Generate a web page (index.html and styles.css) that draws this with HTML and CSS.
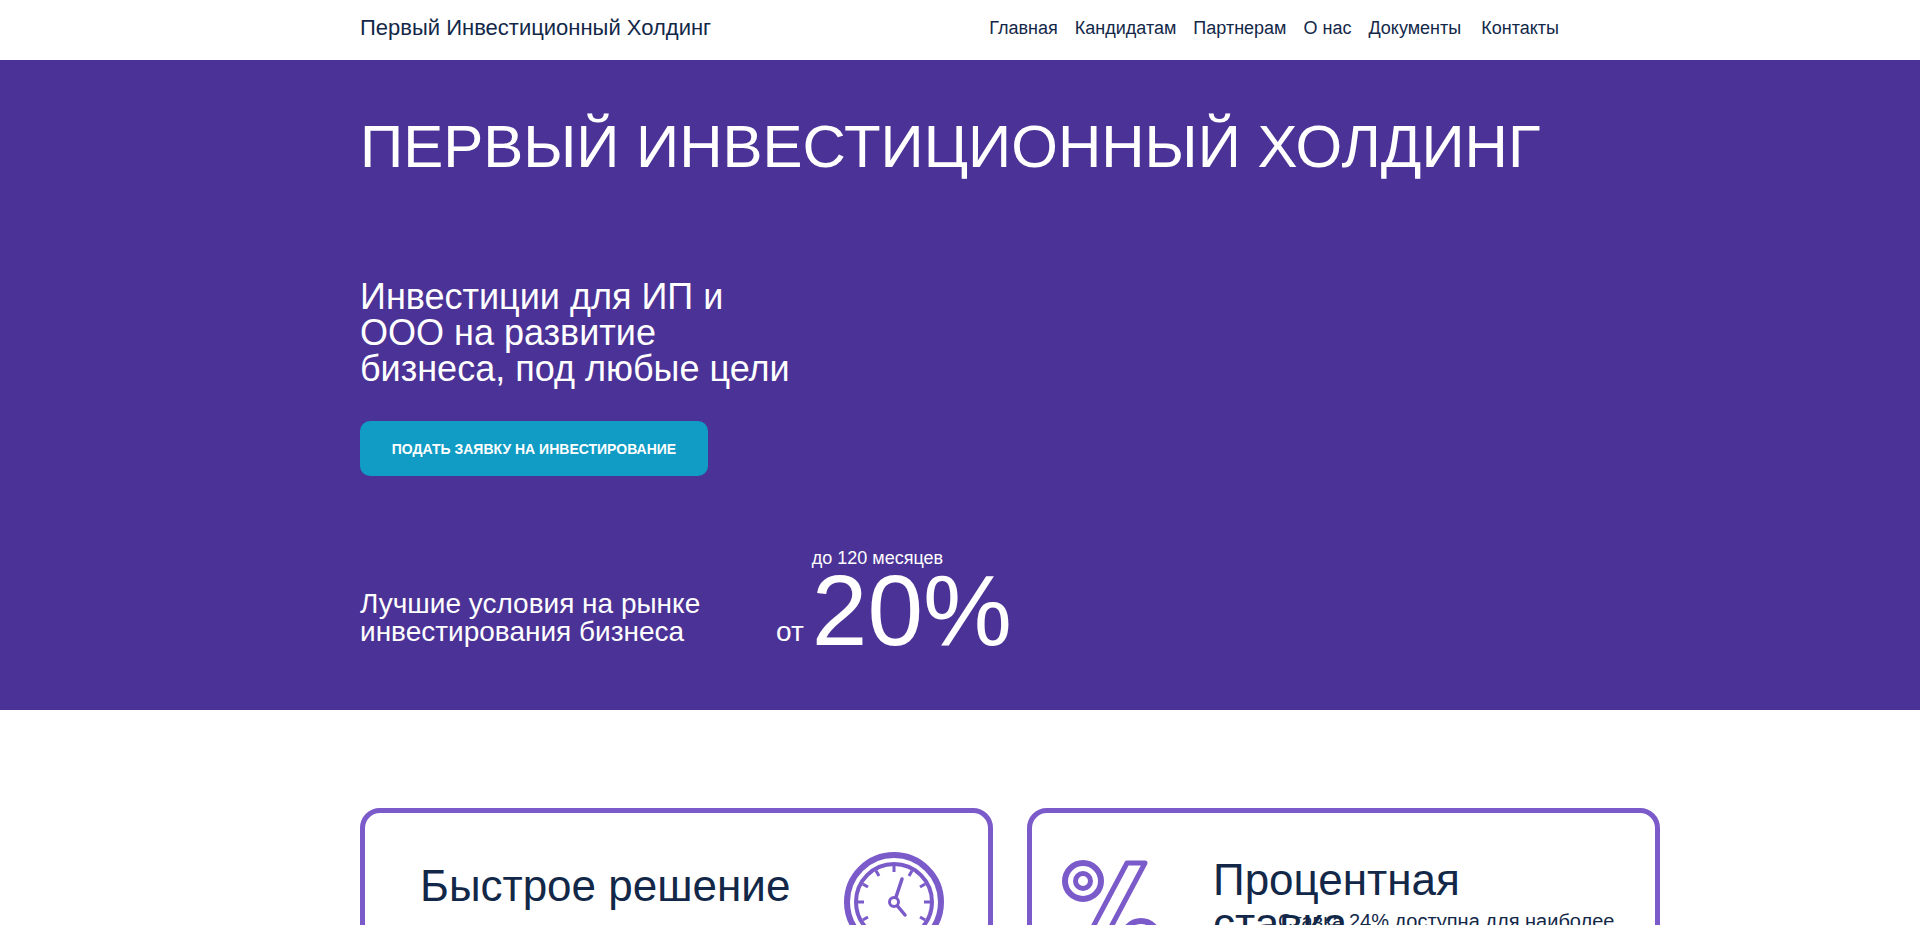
FILE: index.html
```html
<!DOCTYPE html>
<html>
    <head>
        <title>Первый Инвестиционный Холдинг</title>
        <meta charset="utf-8">
        <link rel="stylesheet" href="styles.css">
    </head>
    <body>
        <header class="top-bar">
            <div class="container top-bar-inner">
                <a class="logo" href="#">Первый Инвестиционный Холдинг</a>
                <nav class="menu">
                    <a href="#">Главная</a>
                    <a href="#">Кандидатам</a>
                    <a href="#">Партнерам</a>
                    <a href="#">О нас</a>
                    <a href="#">Документы</a>
                    <a class="menu-last" href="#">Контакты</a>
                </nav>
            </div>
        </header>

        <section class="hero">
            <div class="container">
                <h1>ПЕРВЫЙ ИНВЕСТИЦИОННЫЙ ХОЛДИНГ</h1>
                <h2>Инвестиции для ИП и ООО на развитие бизнеса, под любые цели</h2>
                <a class="apply-btn" href="#">Подать заявку на инвестирование</a>
                <div class="offer">
                    <p class="offer-text">Лучшие условия на рынке инвестирования бизнеса</p>
                    <span class="offer-from">от</span>
                    <div class="offer-rate">
                        <span class="offer-term">до 120 месяцев</span>
                        <span class="offer-value">20%</span>
                    </div>
                </div>
            </div>
        </section>

        <section class="cards">
            <div class="card card-speed">
                <h3>Быстрое решение</h3>
                <svg class="card-icon" viewBox="0 0 100 100" fill="none" stroke="#7b5ac9">
                    <circle cx="50" cy="50" r="47" stroke-width="6"/>
                    <circle cx="50" cy="50" r="38" stroke-width="4"/>
                    <path stroke-width="3" d="M50 14v6M50 80v6M14 50h6M80 50h6M32 18.8l3 5.2M68 18.8l-3 5.2M18.8 32l5.2 3M81.2 32l-5.2 3M18.8 68l5.2-3M81.2 68l-5.2-3M32 81.2l3-5.2M68 81.2l-3-5.2"/>
                    <circle cx="50" cy="50" r="4.5" stroke-width="3"/>
                    <path d="M52 45l6-18M53.5 54l7.5 9" stroke-width="3.5" stroke-linecap="round"/>
                </svg>
            </div>
            <div class="card card-rate">
                <svg class="card-icon" viewBox="0 0 100 100" fill="none" stroke="#7b5ac9" stroke-width="6">
                    <circle cx="21" cy="21" r="18"/>
                    <circle cx="21" cy="21" r="7.5" stroke-width="5"/>
                    <circle cx="79" cy="79" r="18"/>
                    <circle cx="79" cy="79" r="7.5" stroke-width="5"/>
                    <path d="M65 3h18L33 97H15z" stroke-width="5" stroke-linejoin="round"/>
                </svg>
                <div class="card-body">
                    <h3>Процентная ставка</h3>
                    <p>Ставка 24% доступна для наиболее надежных заемщиков</p>
                </div>
            </div>
        </section>
    </body>
</html>
```

FILE: styles.css
```css
html, body {
  height: 100%;
  overflow: hidden;
}
body {
  margin: 0;
  font-family: "Liberation Sans", Arial, sans-serif;
  color: #132848;
  background: #fff;
}
a {
  color: inherit;
  text-decoration: none;
}
.container {
  width: 1200px;
  margin: 0 auto;
}
.top-bar {
  height: 60px;
}
.top-bar-inner {
  height: 56px;
  display: flex;
  align-items: center;
  justify-content: space-between;
}
.logo {
  font-size: 22px;
}
.menu {
  display: flex;
  gap: 17px;
  margin-right: 1px;
  font-size: 18px;
}
.menu-last {
  margin-left: 3px;
}
.hero {
  height: 650px;
  background: #4b3296;
  color: #fff;
}
.hero h1 {
  margin: 0;
  padding-top: 50px;
  font-size: 60px;
  line-height: 74px;
  font-weight: normal;
  white-space: nowrap;
}
.hero h2 {
  width: 440px;
  margin: 95px 0 0;
  font-size: 36px;
  line-height: 36px;
  font-weight: normal;
}
.apply-btn {
  display: flex;
  align-items: center;
  justify-content: center;
  width: 348px;
  height: 55px;
  margin-top: 34px;
  border-radius: 10px;
  background: #109cc4;
  font-size: 14px;
  font-weight: bold;
  text-transform: uppercase;
}
.offer {
  display: flex;
  align-items: flex-end;
  margin-top: 72px;
}
.offer-text {
  width: 416px;
  margin: 0 0 5px;
  font-size: 28px;
  line-height: 28px;
}
.offer-from {
  margin: 0 8px 3px 0;
  font-size: 28px;
}
.offer-rate {
  display: flex;
  flex-direction: column;
}
.offer-term {
  font-size: 18px;
}
.offer-value {
  font-size: 100px;
  line-height: 82px;
}
.cards {
  display: flex;
  gap: 34px;
  margin: 98px 0 0 360px;
}
.card {
  flex: 0 0 633px;
  display: flex;
  height: 300px;
  box-sizing: border-box;
  border: 5px solid #7b5ac9;
  border-radius: 20px;
}
.card h3 {
  margin: 0;
  font-size: 44px;
  font-weight: normal;
}
.card-speed {
  justify-content: space-between;
  padding: 39px 44px 0 55px;
}
.card-speed h3 {
  line-height: 68px;
}
.card-icon {
  width: 100px;
  height: 100px;
  flex-shrink: 0;
}
.card-rate {
  gap: 51px;
  padding: 45px 30px 0 30px;
}
.card-rate .card-icon {
  margin-top: 2px;
}
.card-rate .card-body {
  flex: 1;
  min-width: 0;
}
.card-rate h3 {
  width: 300px;
  height: 50px;
  line-height: 44px;
}
.card-rate p {
  margin: 0 0 0 65px;
  font-size: 20px;
  line-height: 26px;
}
```
